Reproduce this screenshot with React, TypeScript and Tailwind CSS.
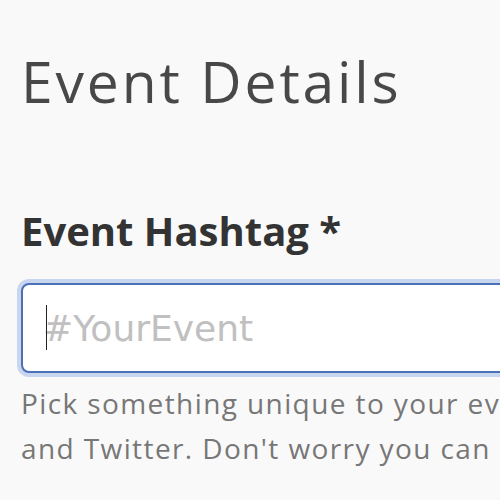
export default function App() {
  return (
    <div
      className="min-h-screen w-[500px] overflow-hidden bg-[#f9f9f9]"
      style={{ fontFamily: '"Open Sans", sans-serif' }}
    >
      <div className="ml-[21px] pt-[41px]">
        <h1 className="text-[57px] leading-[80px] font-normal tracking-[0.05em] text-[#484848]">
          Event Details
        </h1>
        <label className="mt-[85px] block text-[40px] leading-[50px] font-bold text-[#333333]">
          Event Hashtag *
        </label>
        <div className="relative mt-[27px] w-[600px]">
          <input
            placeholder="#YourEvent"
            className="h-[90px] w-full rounded-[8px] border-2 border-[#4a70b8] bg-white px-[20px] text-[36px] text-[#333] placeholder:text-[#c0c0c0] outline-none ring-4 ring-[#c8d6f0]"
            style={{ fontFamily: '"DejaVu Sans", sans-serif' }}
          />
          <span className="pointer-events-none absolute top-[22px] left-[25px] h-[45px] w-px bg-[#222]" />
        </div>
        <p className="mt-[8px] whitespace-nowrap text-[28px] leading-[45px] tracking-[0.05em] text-[#777777]">
          Pick something unique to your event for Instagram
          <br />
          and Twitter. Don't worry you can change this later.
        </p>
      </div>
    </div>
  );
}
